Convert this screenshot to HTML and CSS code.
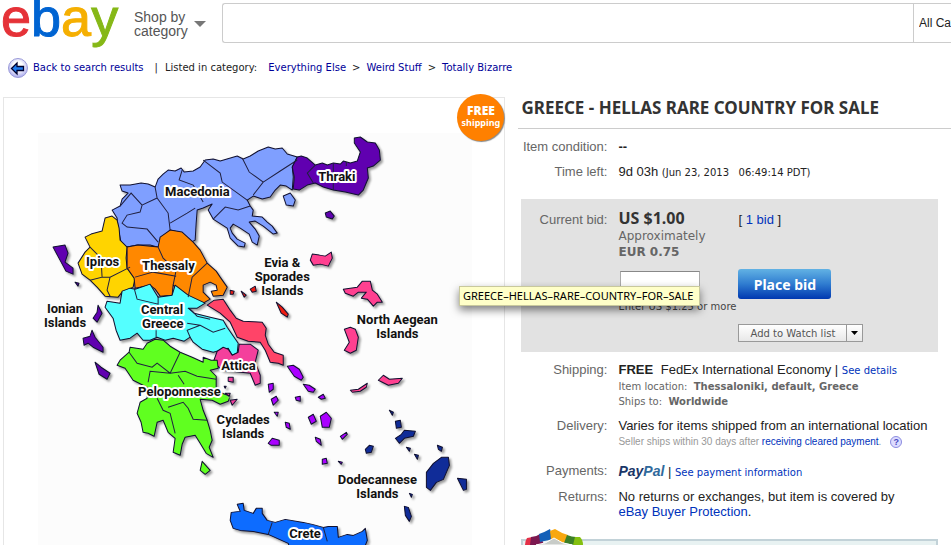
FILE: index.html
```html
<!DOCTYPE html>
<html lang="en">
<head>
  <meta charset="UTF-8">
  <title>GREECE - HELLAS RARE COUNTRY FOR SALE | eBay</title>
  <link rel="stylesheet" href="styles.css">
</head>
<body>
  <header class="header">
    <a class="logo" href="#" aria-label="eBay"><span class="logo-e">e</span><span class="logo-b">b</span><span class="logo-a">a</span><span class="logo-y">y</span></a>
    <button class="shop-by" type="button">
      <span>Shop by<br>category</span>
      <svg width="12" height="6" viewBox="0 0 12 6"><path d="M0 0h12l-6 6z" fill="#777"/></svg>
    </button>
    <form class="search">
      <input type="text" class="search-input" aria-label="Search">
      <select class="search-category" aria-label="Category">
        <option>All Categories</option>
      </select>
    </form>
  </header>

  <nav class="breadcrumb">
    <svg class="back-icon" width="20" height="20" viewBox="0 0 20 20">
      <defs>
        <radialGradient id="ball" cx="50%" cy="40%" r="60%">
          <stop offset="0.4" stop-color="#fff"/>
          <stop offset="1" stop-color="#a8a8ee"/>
        </radialGradient>
      </defs>
      <circle cx="10" cy="10" r="9.5" fill="url(#ball)" stroke="#9a9ad8"/>
      <path d="M3.5 10.5L9 5v3.5h6.5v4H9V16z" fill="#1f7bf0" stroke="#000030" stroke-width="1.3"/>
    </svg>
    <a href="#">Back to search results</a>
    <span class="divider">|</span>
    <span class="listed">Listed in category:</span>
    <a href="#">Everything Else</a>
    <span class="arrow">&gt;</span>
    <a href="#">Weird Stuff</a>
    <span class="arrow">&gt;</span>
    <a href="#">Totally Bizarre</a>
  </nav>

  <main class="item">
    <section class="gallery">
      <svg class="map" viewBox="38 133 434 412" role="img" aria-label="Map of Greece">
        <rect x="38" y="133" width="434" height="412" fill="#fcfcfc"/>

        <!-- mainland regions -->
        <g class="land">
          <path fill="#7f9fff" d="M120 185L130 185 141 183 148 184 155 187 158 179 163 174 168 170 175 171 181 168 184 172 193 171 200 167 205 160 213 159 220 161 237 156 243 159 250 156 258 151 268 147 275 149 282 148 287 154 297 157 292 167 293 177 292 190 286 186 280 185 275 190 270 197 262 199 253 196 247 200 250 206 253 210 252 216 262 217 267 222 272 226 277 233 273 234 263 226 255 221 249 222 255 229 259 236 257 245 252 242 249 234 240 228 233 224 230 228 232 233 237 239 245 243 244 247 238 246 230 238 227 228 213 219 208 210 212 204 203 208 197 210 196 223 195 240 191 242 182 233 170 230 162 237 160 242 158 247 150 245 137 245 127 247 121 243 118 227 117 218 112 210 120 206 122 199 128 193 122 191z"/>
          <path fill="#6000b0" d="M297 157L301 156 307 158 315 165 322 163 327 165 333 163 340 164 343 161 350 163 357 161 360 152 354 143 354 138 360 137 367 142 375 143 379 150 380 160 373 166 367 168 368 178 363 190 358 195 345 192 333 190 323 187 315 183 307 185 299 190 293 189 294 177 292 167z"/>
          <path fill="#ffd400" d="M112 216L117 220 119 228 120 240 127 247 126 258 127 268 135 278 133 287 122 292 118 297 105 296 97 287 90 280 82 274 78 263 85 252 90 247 85 237 91 234 102 231 105 218z"/>
          <path fill="#ff8800" d="M127 247L138 245 158 247 160 237 170 230 182 232 193 242 200 250 207 263 216 271 220 277 227 287 223 295 213 296 211 291 217 290 216 285 210 282 203 285 203 292 210 299 203 303 188 297 173 285 172 295 160 296 155 289 150 285 135 288 134 278 127 268z"/>
          <path fill="#54ffff" d="M122 291L130 288 135 289 150 284 158 297 172 295 175 285 188 295 205 303 197 308 188 308 194 313 210 317 223 320 227 327 238 343 237 353 232 355 228 348 213 352 202 349 193 342 190 337 184 341 173 338 165 340 157 337 150 340 143 340 137 333 130 338 120 340 116 330 113 318 105 307 107 301 120 303z"/>
          <path fill="#ff4468" d="M207 305L214 300 223 299 230 310 236 318 243 321 262 322 266 328 265 335 268 344 274 352 283 355 283 365 278 363 270 362 265 350 260 342 248 341 237 337 230 322 220 313z"/>
          <path fill="#f4409c" d="M213 362L217 351 223 347 228 349 232 355 238 352 239 344 250 344 258 350 255 362 260 375 260 383 255 385 250 373 222 370z"/>
          <path fill="#60ff20" d="M130 347L143 349 147 343 155 339 163 340 170 346 180 352 192 357 203 362 203 357 211 360 217 360 218 368 210 370 216 376 216 388 222 393 230 396 228 401 220 404 212 400 200 399 203 410 207 420 210 430 212 440 209 447 213 457 206 453 200 443 195 435 185 437 182 444 180 455 173 452 175 438 168 432 163 420 157 422 154 436 148 433 143 432 141 422 137 413 140 402 147 398 147 387 133 380 125 368 117 365 120 360 129 352z"/>
          <path fill="#60ff20" d="M202 461L210 470 205 474 200 470z"/>
          <path fill="#0d6cff" d="M230 520L231 512 240 511 237 504 243 503 244 510 253 513 256 508 262 508 262 513 267 520 275 522 285 519 303 522 312 524 323 527 328 526 337 526 338 537 347 534 353 535 362 531 365 528 367 540 363 550 290 550 288 543 268 534 253 531 240 530 233 528z"/>
        </g>

        <!-- prefecture borders -->
        <g class="borders">
          <path d="M155 187L157 198 168 213 170 230M157 198L142 205 140 212 127 215 122 223 127 227 147 229 158 242M120 206L131 193 142 205M170 223L187 213 195 208M182 170L179 180 193 185 203 202M203 160L220 173 222 182 247 200M242 158L249 172 263 182 253 195M263 182L280 171 297 160M213 219L225 207 238 210 250 206"/>
          <path d="M315 165L307 173 313 183M333 190L333 164M346 162V166"/>
          <path d="M90 247L101 258 102 277 90 280M102 277L110 277 130 267M110 277L107 290 110 296M158 247L163 258 176 270 173 285M135 277L153 272 176 276M207 263L192 277 188 297"/>
          <path d="M134 288L137 299 158 304V296M156 337V330M187 323L200 325 213 332 225 328M190 309L197 316 210 319M200 325L187 330 190 337"/>
          <path d="M129 352L137 363 152 367 157 363 170 373 180 352M148 382L150 371 170 373 185 371 197 376 216 379M178 375L184 384M157 398L163 410 170 413 175 433M168 407L183 402 188 408 193 419 207 420M272 522L268 534M323 527L327 541"/>
        </g>

        <!-- islands -->
        <g class="land">
          <path fill="#7f9fff" d="M283 196L290 193 295 200 293 206 286 205z"/>
          <path fill="#6000b0" d="M325 213L330 211 334 216 332 219 326 217zM53 247L65 245 68 253 65 262 73 268 73 274 66 271 60 260zM75 282L79 283 78 286zM98 305L102 313 97 322 93 318 97 312zM92 330L95 337 103 347 103 352 93 347 88 343 84 345 83 338 90 336zM95 362L101 367 110 373 107 379 99 374z"/>
          <path fill="#ff4090" d="M310 260L312 254 319 255 325 256 331 252 332 258 328 266 320 264 313 265zM343 289L357 287 362 281 370 281 372 290 377 294 382 302 377 302 373 306 367 299 361 298 366 292 358 292 353 296 345 293zM344 329L350 327 355 329 358 337 356 350 350 353 344 350 349 342zM350 390L358 389 367 383 366 387 360 391 352 392zM378 380L383 375 389 379 402 378 398 383 388 385z"/>
          <path fill="#f4409c" d="M228 377L233 377 233 382 228 381zM224 386L226 386 225 388zM225 393L230 393 229 396zM230 400L237 399 232 405z"/>
          <path fill="#ee1c10" d="M230 290L234 291 233 294 230 294zM241 291L246 295 244 297zM250 289L255 286 256 291 252 292zM276 302L282 307 288 314 287 317 281 313z"/>
          <path fill="#aa00ff" d="M287 366L293 365 299 369 303 377 301 380 294 376zM303 384L309 385 315 389 313 392 308 391zM318 397L323 394 325 398 321 399zM268 384L273 383 273 389 269 392zM271 399L276 396 278 400 273 405zM295 397L300 396 300 401 296 400zM308 417L313 414 316 421 311 424zM320 416L326 412 331 418 329 427 322 427zM274 412L278 412 277 416zM285 422L289 423 290 429 286 427zM268 443L272 438 279 440 279 445 271 445zM340 436L346 432 347 434 342 439zM315 437L320 439 321 445 316 441zM322 459L326 458 327 463 322 464zM338 461L342 462 341 464z"/>
          <path fill="#102c98" d="M389 410L393 412 392 415zM395 421L400 420 401 427 396 428zM395 438L401 434 404 430 415 431 413 436 404 438 399 443zM406 447L410 448 409 451zM414 454L418 455 417 459zM437 445L442 447 441 451 438 449zM365 449L369 445 373 446 371 452 366 453zM448 457L449 465 443 479 436 482 430 490 426 487 426 472 433 463 441 457zM457 478L466 479 466 489 463 490zM409 493L412 494 411 497zM404 506L408 507 411 516 409 521 405 515z"/>
        </g>

        <g class="map-labels">
          <text x="165" y="196">Macedonia</text>
          <text x="318" y="181">Thraki</text>
          <text x="86" y="266">Ipiros</text>
          <text x="142" y="270">Thessaly</text>
          <text x="141" y="314">Central</text>
          <text x="142" y="328">Greece</text>
          <text x="221" y="370">Attica</text>
          <text x="138" y="396">Peloponnesse</text>
          <text x="289" y="538">Crete</text>
        </g>
        <g class="map-labels sea">
          <text x="282" y="267">Evia &amp;</text>
          <text x="282" y="281">Sporades</text>
          <text x="282" y="295">Islands</text>
          <text x="65" y="313">Ionian</text>
          <text x="65" y="327">Islands</text>
          <text x="397" y="324">North Aegean</text>
          <text x="397" y="338">Islands</text>
          <text x="243" y="424">Cyclades</text>
          <text x="243" y="438">Islands</text>
          <text x="377" y="484">Dodecannese</text>
          <text x="377" y="498">Islands</text>
        </g>
      </svg>
      <div class="badge"><b>FREE</b>shipping</div>
      <div class="tooltip" role="tooltip">GREECE–HELLAS–RARE–COUNTRY–FOR–SALE</div>
    </section>

    <section class="details">
      <h1>GREECE - HELLAS RARE COUNTRY FOR SALE</h1>

      <div class="row">
        <span class="label">Item condition:</span>
        <div><b>--</b></div>
      </div>
      <div class="row">
        <span class="label">Time left:</span>
        <div>9d 03h <small class="ends">(Jun 23, 2013 &nbsp; 06:49:14 PDT)</small></div>
      </div>

      <form class="bid-box">
        <label class="label" for="maxBid">Current bid:</label>
        <div class="price">
          <strong>US $1.00</strong>
          <span>Approximately</span>
          <b>EUR 0.75</b>
        </div>
        <div class="bids">[ <a href="#">1 bid</a> ]</div>
        <div class="bid-entry">
          <input type="text" id="maxBid">
          <span class="hint">Enter US $1.25 or more</span>
        </div>
        <button type="submit" class="place-bid">Place bid</button>
        <div class="watch">
          <button type="button" class="watch-add">Add to Watch list</button>
          <button type="button" class="watch-more" aria-label="More lists">
            <svg width="7" height="4" viewBox="0 0 7 4"><path d="M0 0h7L3.5 4z"/></svg>
          </button>
        </div>
      </form>

      <div class="row">
        <span class="label">Shipping:</span>
        <div>
          <b class="free">FREE</b> FedEx International Economy | <a class="small" href="#">See details</a>
          <p class="note">Item location: &nbsp;<b>Thessaloniki, default, Greece</b></p>
          <p class="note">Ships to: &nbsp;<b>Worldwide</b></p>
        </div>
      </div>
      <div class="row">
        <span class="label">Delivery:</span>
        <div>
          Varies for items shipped from an international location
          <p class="seller">Seller ships within 30 days after <a href="#">receiving cleared payment</a>.
            <button type="button" class="help" aria-label="Help">?</button></p>
        </div>
      </div>
      <div class="row payments">
        <span class="label">Payments:</span>
        <div><span class="paypal">Pay<span>Pal</span></span> | <a class="small" href="#">See payment information</a></div>
      </div>
      <div class="row returns">
        <span class="label">Returns:</span>
        <div>No returns or exchanges, but item is covered by<br><a href="#">eBay Buyer Protection</a>.</div>
      </div>

      <div class="protection">
        <svg class="shield" width="64" height="16" viewBox="0 0 64 16">
          <path d="M3 16q0-4 2-7l6-1-1 8z" fill="#e43048"/>
          <path d="M8 16l1-8q5 0 9-3l4 11z" fill="#7c1850"/>
          <path d="M18 13l-1-8q6-2 11-5l3 10z" fill="#1460b8"/>
          <path d="M29 10L28 2l5-2q6 4 13 6l-3 8z" fill="#f8a810"/>
          <path d="M42 14l3-8q5 2 9 2l-1 8z" fill="#3c8028"/>
          <path d="M51 16l2-8h5q3 3 3 8z" fill="#84c010"/>
          <path d="M14 16q10-1 18-7 8 6 18 7z" fill="#c8ccc8" stroke="#fff"/>
        </svg>
      </div>
    </section>
  </main>
</body>
</html>
```
FILE: styles.css
```css
* {
  box-sizing: border-box;
}

body {
  margin: 0;
  background-color: #fff;
  color: #222;
  font-family: "Liberation Sans", Arial, sans-serif;
  font-size: 13px;
  line-height: 16px;
}

a {
  color: #0033bb;
  text-decoration: none;
}

button, input, select {
  font-family: inherit;
  margin: 0;
}

p {
  margin: 0;
}

/* header */
.header {
  display: flex;
  align-items: flex-start;
  padding-top: 3px;
}

.logo {
  width: 133px;
  height: 37px;
  margin-top: -4px;
  padding-left: 1px;
  font-size: 54px;
  line-height: 37px;
  -webkit-text-stroke: 1px currentColor;
}

.logo-e { color: #e53238; -webkit-text-stroke-color: #e53238; }
.logo-b { color: #0064d2; -webkit-text-stroke-color: #0064d2; }
.logo-a { color: #f5af02; -webkit-text-stroke-color: #f5af02; }
.logo-y { color: #86b817; -webkit-text-stroke-color: #86b817; }

.shop-by {
  display: flex;
  align-items: center;
  gap: 6px;
  width: 89px;
  padding: 7px 0 0 1px;
  border: 0;
  background: none;
  color: #555;
  font-size: 14px;
  line-height: 14px;
  text-align: left;
}

.search {
  flex: 1;
  display: flex;
  height: 40px;
  border: 1px solid #ccc;
  border-right: 0;
  border-radius: 3px 0 0 3px;
  min-width: 0;
}

.search-input {
  flex: 1;
  min-width: 0;
  border: 0;
  background: none;
}

.search-category {
  width: 38px;
  padding: 0 0 0 5px;
  border: 0;
  border-left: 1px solid #ccc;
  border-radius: 0;
  background: none;
  appearance: none;
  color: #222;
  font-size: 12px;
}

/* breadcrumb */
.breadcrumb {
  display: flex;
  align-items: center;
  height: 20px;
  margin: 15px 0 19px 8px;
  font-family: "DejaVu Sans", Verdana, sans-serif;
  font-size: 10px;
}

.breadcrumb a {
  color: #000099;
}

.back-icon {
  margin-right: 5px;
}

.divider {
  margin: 0 7px 0 11px;
}

.listed {
  margin-right: 11px;
}

.arrow {
  margin: 0 6px;
}

/* item page */
.item {
  display: grid;
  grid-template-columns: 53% 1fr;
  column-gap: 13px;
  margin-left: 3px;
}

.gallery {
  position: relative;
  padding: 35px 32px 0 34px;
  border: 1px solid #e6e6e6;
  border-bottom: 0;
}

.map {
  display: block;
  width: 100%;
}

.land {
  stroke: #101030;
  stroke-width: 1;
  stroke-linejoin: round;
  filter: drop-shadow(2px 2px 1px #999);
}

.borders {
  fill: none;
  stroke: #202040;
  stroke-width: 1;
}

.map-labels {
  fill: #111;
  font-family: Roboto, "Arial Narrow", sans-serif;
  font-size: 13px;
  font-weight: bold;
  stroke: #fff;
  stroke-width: 4px;
  stroke-linejoin: round;
  paint-order: stroke;
}

.sea {
  stroke: none;
  text-anchor: middle;
}

.badge {
  position: absolute;
  top: -4px;
  right: 0;
  width: 47px;
  height: 47px;
  padding-top: 11px;
  border-radius: 50%;
  background-color: #ff8000;
  box-shadow: 1px 1px 1px #888;
  color: #fff;
  font-family: "Noto Sans", sans-serif;
  font-size: 9px;
  font-weight: bold;
  line-height: 12px;
  text-align: center;
}

.badge b {
  display: block;
  font-size: 12px;
}

.tooltip {
  position: absolute;
  top: 188px;
  left: 455px;
  z-index: 1;
  padding: 0 6px 0 3px;
  border: 1px solid #c8c89c;
  background-color: #ffffc8;
  box-shadow: 0 4px 8px rgba(0, 0, 0, 0.5);
  color: #000;
  font-family: "Noto Sans", sans-serif;
  font-size: 11px;
  line-height: 18px;
  white-space: nowrap;
}

.details {
  display: flex;
  flex-direction: column;
  min-width: 0;
}

h1 {
  margin: 0 0 10px;
  padding: 0 3px 10px;
  border-bottom: 1px solid #ccc;
  color: #333;
  font-family: "Noto Sans", "Trebuchet MS", sans-serif;
  font-size: 17px;
  line-height: 21px;
  white-space: nowrap;
}

.row {
  display: grid;
  grid-template-columns: 86px 1fr;
  column-gap: 11px;
  margin: 0 0 9px 3px;
  white-space: nowrap;
}

.label {
  color: #666;
  text-align: right;
}

.ends, .small {
  font-family: "DejaVu Sans", Verdana, sans-serif;
  font-size: 10px;
}

/* bid box */
.bid-box {
  display: grid;
  grid-template-columns: 86px 109px 1fr;
  column-gap: 11px;
  row-gap: 9px;
  align-items: start;
  margin: 9px 13px 10px 3px;
  padding: 9px 0 10px;
  background-color: #e2e2e2;
}

.bid-box .label, .bids {
  padding-top: 4px;
}

.price {
  display: flex;
  flex-direction: column;
  color: #666;
  font-family: "DejaVu Sans", Verdana, sans-serif;
  font-size: 12px;
}

.price strong {
  color: #333;
  font-family: "Noto Sans", "Trebuchet MS", sans-serif;
  font-size: 16px;
  line-height: 20px;
}

.bid-entry {
  grid-column: 2;
  display: flex;
  flex-direction: column;
  gap: 8px;
  padding-top: 2px;
}

.bid-entry input {
  width: 80px;
  height: 20px;
  margin-left: 2px;
  border: 1px solid #aaa;
  border-top-color: #888;
  background-color: #fff;
}

.hint {
  color: #444;
  font-family: "DejaVu Sans", Verdana, sans-serif;
  font-size: 10px;
  white-space: nowrap;
}

.place-bid {
  width: 93px;
  height: 30px;
  padding: 0;
  border: 0;
  border-radius: 3px;
  background: linear-gradient(#62b2e4, #2f7cd0 50%, #0038b0);
  color: #fff;
  font-family: "Noto Sans", "Trebuchet MS", sans-serif;
  font-size: 14px;
  font-weight: bold;
}

.watch {
  grid-column: 3;
  display: flex;
}

.watch button {
  height: 18px;
  padding: 0;
  border: 1px solid #999;
  background: linear-gradient(#fff, #e8e8e8);
}

.watch .watch-add {
  width: 109px;
  color: #555;
  font-family: "DejaVu Sans", Verdana, sans-serif;
  font-size: 10px;
}

.watch .watch-more {
  display: flex;
  align-items: center;
  justify-content: center;
  width: 16px;
  border-left: 0;
}

/* shipping and payment rows */
.free {
  margin-right: 4px;
}

.note {
  color: #666;
  font-family: "DejaVu Sans", Verdana, sans-serif;
  font-size: 10px;
  line-height: 15px;
}

.seller {
  color: #999;
  font-size: 10px;
}

.help {
  width: 12px;
  height: 12px;
  margin-left: 6px;
  padding: 0;
  border: 1px solid #8c8ce0;
  border-radius: 50%;
  background-color: #dcdcff;
  color: #4848c0;
  font-size: 9px;
  font-weight: bold;
  line-height: 10px;
}

.payments {
  margin-top: 4px;
  margin-bottom: 8px;
}

.returns {
  line-height: 15px;
}

.paypal {
  color: #1a3668;
  font-size: 14px;
  font-style: italic;
  font-weight: bold;
}

.paypal span {
  color: #2f6a9c;
}

.protection {
  position: relative;
  flex: 1;
  min-height: 6px;
  margin: 11px 13px 0 3px;
  border: 2px solid #c2d2d8;
  border-bottom: 0;
  background-color: #e8f2f2;
}

.shield {
  position: absolute;
  top: -12px;
  left: -1px;
}
```
